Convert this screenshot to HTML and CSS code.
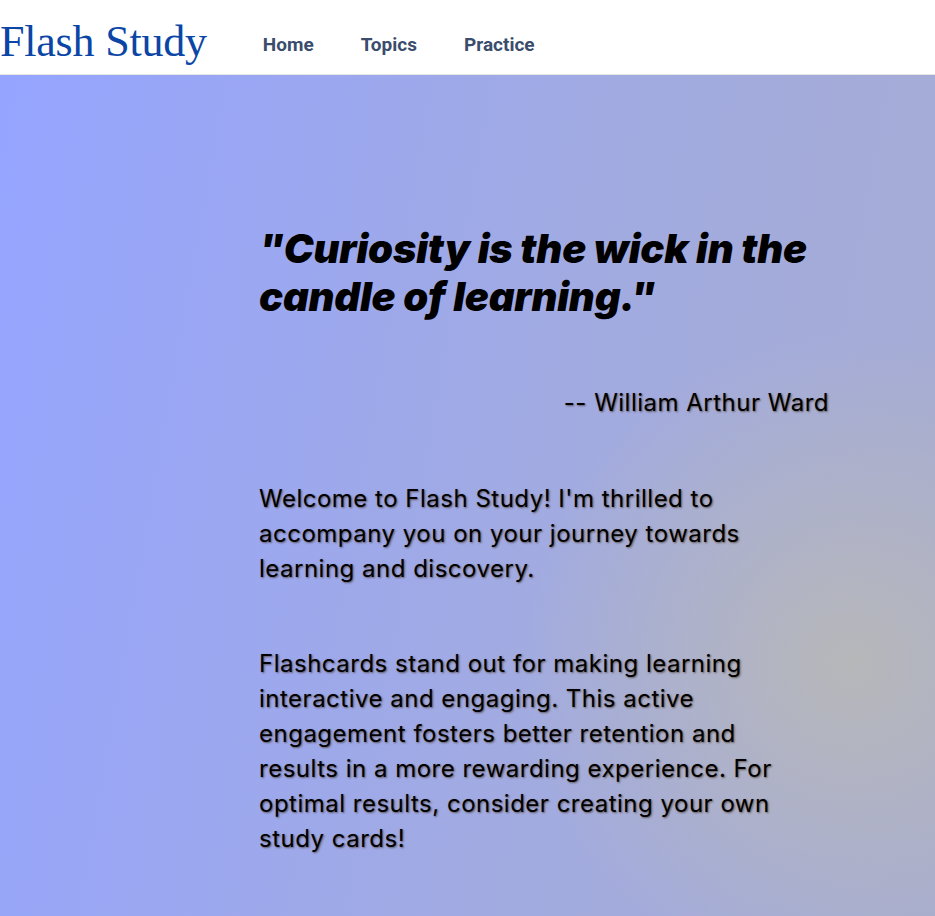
FILE: index.html
```html
<!DOCTYPE html>
<html lang="en">
<head>
<meta charset="utf-8">
<title>Flash Study</title>
<link rel="stylesheet" href="styles.css">
</head>
<body>
<header class="site-header">
  <a class="logo" href="#">Flash Study</a>
  <nav class="nav">
    <a href="#">Home</a>
    <a href="#">Topics</a>
    <a href="#">Practice</a>
  </nav>
</header>
<main class="hero">
  <div class="content">
    <blockquote class="quote">"Curiosity is the wick in the candle of learning."</blockquote>
    <p class="author">-- William Arthur Ward</p>
    <p class="text">Welcome to Flash Study! I'm thrilled to accompany you on your journey towards learning and discovery.</p>
    <p class="text">Flashcards stand out for making learning interactive and engaging. This active engagement fosters better retention and results in a more rewarding experience. For optimal results, consider creating your own study cards!</p>
  </div>
</main>
</body>
</html>
```
FILE: styles.css
```css
html, body {
  margin: 0;
  padding: 0;
}
body {
  font-family: Inter, "Noto Sans", sans-serif;
  background: #fff;
}
.site-header {
  height: 74px;
  display: flex;
  align-items: center;
  gap: 56px;
  background: #fff;
  border-bottom: 1px solid #e6e6e6;
}
.logo {
  font-family: "Liberation Serif", serif;
  font-size: 44px;
  letter-spacing: -0.2px;
  color: #0b46a6;
  text-decoration: none;
  margin-top: 8px;
}
.nav {
  display: flex;
  gap: 47px;
  margin-top: 14px;
}
.nav a {
  font-family: Roboto, sans-serif;
  font-weight: 700;
  font-size: 19px;
  color: #3a4d6c;
  text-decoration: none;
}
.hero {
  min-height: 841px;
  background:
    radial-gradient(circle at 91% 70%, rgba(184,184,184,0.95) 0, rgba(184,184,184,0) 330px),
    linear-gradient(100deg, #95a4ff 0%, #a2abe0 60%, #a6acd2 100%);
  padding-top: 150px;
  box-sizing: border-box;
}
.content {
  margin-left: 259px;
  width: 570px;
}
.quote {
  margin: 0;
  font-weight: 900;
  font-style: italic;
  font-size: 40px;
  line-height: 48px;
  letter-spacing: -0.2px;
  color: #000;
}
.author {
  text-align: right;
  margin: 66px 0 0;
  font-size: 24px;
  line-height: 32px;
  letter-spacing: 0.5px;
  text-shadow: 1px 1px 2px rgba(60,40,20,0.65);
}
.text {
  margin: 62px 0 0;
  width: 540px;
  font-size: 24px;
  line-height: 35px;
  letter-spacing: 0.5px;
  text-shadow: 1px 1px 2px rgba(60,40,20,0.65);
}
.text + .text {
  margin-top: 60px;
}
```
